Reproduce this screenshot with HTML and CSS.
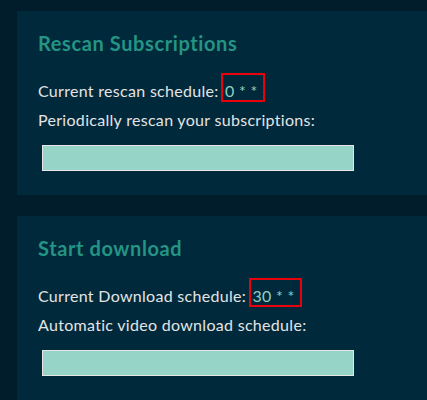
FILE: index.html
```html
<!DOCTYPE html>
<html>
<head>
<meta charset="utf-8">
<link rel="stylesheet" href="styles.css">
</head>
<body>
<div class="card">
  <h2 class="title">Rescan Subscriptions</h2>
  <p class="line">Current rescan schedule: <span class="sched">0 * *</span></p>
  <p class="line">Periodically rescan your subscriptions:</p>
  <div class="field"></div>
</div>
<div class="card">
  <h2 class="title">Start download</h2>
  <p class="line">Current Download schedule: <span class="sched">30 * *</span></p>
  <p class="line">Automatic video download schedule:</p>
  <div class="field"></div>
</div>
</body>
</html>
```
FILE: styles.css
```css
html {
  margin: 0;
  height: 400px;
  overflow: hidden;
  background: #011c2b;
}
body {
  margin: 0;
  padding: 11px 0 0 17px;
  font-family: Lato, "Noto Sans", sans-serif;
  overflow: hidden;
  height: 400px;
  box-sizing: border-box;
}
.card {
  background: #00293b;
  padding: 20px 0 24px 21px;
  margin-bottom: 21px;
}
.title {
  margin: 0;
  font-size: 20px;
  line-height: 24px;
  font-weight: 700;
  color: #249484;
  letter-spacing: 0.6px;
}
.line {
  margin: 0;
  font-size: 16px;
  line-height: 29px;
  color: #e4e4e4;
  letter-spacing: 0.3px;
}
.title + .line {
  margin-top: 21px;
}
.sched {
  color: #8fd0c2;
  border: 2px solid #e8000c;
  padding: 6px 5px 0 2px;
  margin-left: -2px;
}
.field {
  margin: 11px 0 0 4px;
  width: 310px;
  height: 24px;
  background: #97d4c8;
  border: 1px solid #e6e6e6;
}
```
